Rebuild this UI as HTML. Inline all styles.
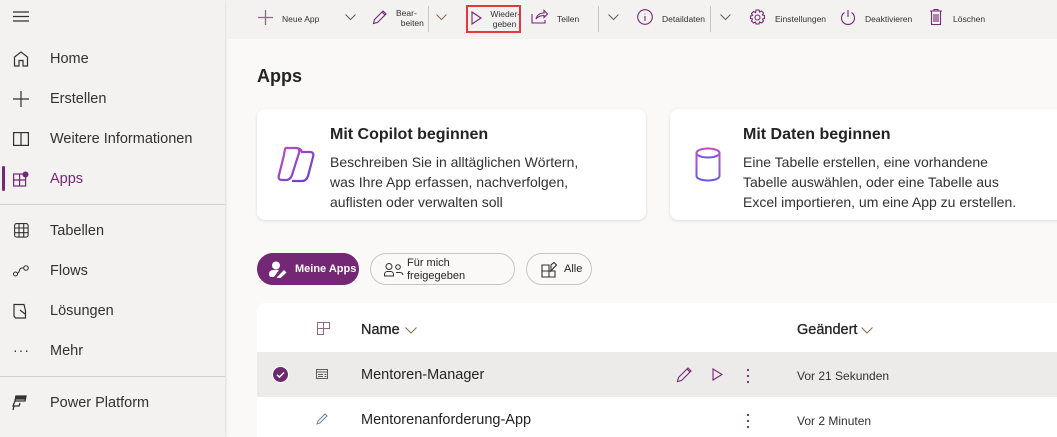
<!DOCTYPE html>
<html><head><meta charset="utf-8"><style>
*{box-sizing:border-box;margin:0;padding:0}
body{width:1057px;height:437px;overflow:hidden;background:#faf9f8;font-family:"Liberation Sans",sans-serif;color:#242424;position:relative}
.abs{position:absolute}
#side{left:0;top:0;width:225px;height:437px;background:#f3f2f1;box-shadow:1px 0 3px rgba(0,0,0,.12)}
.ni{position:absolute;left:50px;font-size:14.5px;color:#323130;line-height:18px}
.ic{position:absolute}
#tb{left:226px;top:0;width:831px;height:39px;background:#f3f2f1}
.tt{position:absolute;font-size:8.5px;color:#323130;line-height:10px}
.sep{position:absolute;top:6px;width:1px;height:26px;background:#c8c6c4}
.card{position:absolute;background:#fff;border-radius:8px;box-shadow:0 1px 3px rgba(0,0,0,.13)}
.ct{position:absolute;font-size:16px;font-weight:bold;color:#242424}
.cb{position:absolute;font-size:14px;line-height:20px;color:#323130}
.pill{position:absolute;top:253px;height:32px;border-radius:16px;border:1px solid #c8c6c4;background:#faf9f8;font-size:11px;color:#242424}
</style></head><body>
<div id="side" class="abs">
<svg class="ic" style="left:13px;top:11px" width="16" height="12"><path d="M0 1h16M0 5.5h16M0 10h16" stroke="#323130" stroke-width="1.2"/></svg>
<svg class="ic" style="left:13px;top:51px" width="16" height="16" fill="none" stroke="#323130" stroke-width="1.2"><path d="M1.5 15V6L8 1l6.5 5v9h-4.5V9.5h-4V15z"/></svg>
<div class="ni" style="top:50px">Home</div>
<svg class="ic" style="left:13px;top:91px" width="16" height="16"><path d="M8 0v16M0 8h16" stroke="#323130" stroke-width="1.2"/></svg>
<div class="ni" style="top:90px">Erstellen</div>
<svg class="ic" style="left:13px;top:131px" width="16" height="16" fill="none" stroke="#323130" stroke-width="1.2"><rect x=".6" y="1.6" width="14.8" height="12.8"/><path d="M8 1.6v12.8"/></svg>
<div class="ni" style="top:130px">Weitere Informationen</div>
<div class="abs" style="left:2px;top:166px;width:3px;height:25px;background:#742774;border-radius:2px"></div>
<svg class="ic" style="left:13px;top:171px" width="16" height="16" fill="none" stroke="#742774" stroke-width="1.2"><rect x=".6" y="3" width="12" height="12"/><path d="M6.6 3v12M.6 9h12"/><circle cx="12.5" cy="3.5" r="3" fill="#742774" stroke="none"/></svg>
<div class="ni" style="top:170px;color:#742774">Apps</div>
<div class="abs" style="left:0;top:204px;width:225px;height:1px;background:#d2d0ce"></div>
<svg class="ic" style="left:14px;top:223px" width="15" height="15" fill="none" stroke="#323130" stroke-width="1.1"><rect x=".6" y=".6" width="13.5" height="13.5" rx="2"/><path d="M5 .6v13.5M9.7.6v13.5M.6 5h13.5M.6 9.7h13.5"/></svg>
<div class="ni" style="top:222px">Tabellen</div>
<svg class="ic" style="left:13px;top:265px" width="16" height="12" fill="none" stroke="#323130" stroke-width="1"><circle cx="2.5" cy="9" r="2"/><circle cx="13" cy="3" r="2.3"/><path d="M4.3 8C7 8 6 3 8.5 3h2.2"/></svg>
<div class="ni" style="top:262px">Flows</div>
<svg class="ic" style="left:13px;top:303px" width="16" height="16" fill="none" stroke="#323130" stroke-width="1.2"><path d="M1 1.5h10l1.5 6.5V15H2.5L1 13zM7 7l5 4"/></svg>
<div class="ni" style="top:302px">Lösungen</div>
<div class="ni" style="top:341px;left:13px;font-size:14px;letter-spacing:1px">···</div>
<div class="ni" style="top:342px">Mehr</div>
<div class="abs" style="left:0;top:376px;width:225px;height:1px;background:#d2d0ce"></div>
<svg class="ic" style="left:11px;top:395px" width="17" height="16" fill="none" stroke="#323130" stroke-width="1.3"><path d="M5 1h10l-1 5H4zM4 6L2 11h6l1-3M3 11l-1 4"/><path d="M5 1.5h9.5l-.5 2.5H4.5z" fill="#323130"/></svg>
<div class="ni" style="top:394px">Power Platform</div>
</div>

<div id="tb" class="abs">
<svg class="ic" style="left:32px;top:10px" width="15" height="15"><path d="M7.5 0v15M0 7.5h15" stroke="#8a6a87" stroke-width="1.3"/></svg>
<div class="tt" style="left:56px;top:14px">Neue App</div>
<svg class="ic" style="left:119px;top:14px" width="11" height="7" fill="none" stroke="#605e5c"><path d="M.5.5l5 5 5-5"/></svg>
<svg class="ic" style="left:146px;top:9px" width="16" height="16" fill="none" stroke="#742774" stroke-width="1.1"><path d="M1.5 14.5l1-4L11 2l3 3-8.5 8.5zM10 3l3 3"/></svg>
<div class="tt" style="left:170px;top:8px">Bear-<br>&nbsp;&nbsp;beiten</div>
<div class="sep" style="left:202px"></div>
<svg class="ic" style="left:210px;top:14px" width="11" height="7" fill="none" stroke="#8a6a4a"><path d="M.5.5l5 5 5-5"/></svg>
<div class="abs" style="left:240px;top:5px;width:55px;height:28px;border:2px solid #e0393e"></div>
<svg class="ic" style="left:245px;top:11px" width="11" height="14" fill="none" stroke="#742774" stroke-width="1.1"><path d="M1 1l9 6-9 6z"/></svg>
<div class="tt" style="left:262px;top:9px">&nbsp;Wieder-<br>&nbsp;&nbsp;geben</div>
<svg class="ic" style="left:305px;top:9px" width="17" height="15" fill="none" stroke="#742774" stroke-width="1.1"><path d="M1 5v9h13v-3M5 10c1-4 4-6 8-6V1.5l3.5 3.5L13 8.5V6.5c-3 0-6 1-8 3.5"/></svg>
<div class="tt" style="left:331px;top:14px">Teilen</div>
<div class="sep" style="left:372px"></div>
<svg class="ic" style="left:382px;top:14px" width="11" height="7" fill="none" stroke="#605e5c"><path d="M.5.5l5 5 5-5"/></svg>
<svg class="ic" style="left:411px;top:9px" width="16" height="16" fill="none" stroke="#742774" stroke-width="1.1"><circle cx="8" cy="8" r="7.3"/><path d="M8 7v5M8 4.5v.8"/></svg>
<div class="tt" style="left:436px;top:14px">Detaildaten</div>
<div class="sep" style="left:484px"></div>
<svg class="ic" style="left:494px;top:14px" width="11" height="7" fill="none" stroke="#605e5c"><path d="M.5.5l5 5 5-5"/></svg>
<svg class="ic" style="left:523px;top:9px" width="17" height="17" fill="none" stroke="#742774" stroke-width="1.1"><circle cx="8.5" cy="8.5" r="2.5"/><path d="M7 1h3l.5 2 2-1 2 2-1 2 2 .5v3l-2 .5 1 2-2 2-2-1-.5 2H7l-.5-2-2 1-2-2 1-2-2-.5V7l2-.5-1-2 2-2 2 1z"/></svg>
<div class="tt" style="left:549px;top:14px">Einstellungen</div>
<svg class="ic" style="left:614px;top:9px" width="16" height="17" fill="none" stroke="#742774" stroke-width="1.1"><path d="M8 1v7M4.5 3.5a6.5 6.5 0 1 0 7 0"/></svg>
<div class="tt" style="left:639px;top:14px">Deaktivieren</div>
<svg class="ic" style="left:704px;top:9px" width="12" height="16" fill="none" stroke="#742774" stroke-width="1.1"><path d="M0 2h12M4 2V.5h4V2M1.5 2v13.5h9V2M4 5v8M6 5v8M8 5v8"/></svg>
<div class="tt" style="left:727px;top:14px">Löschen</div>
</div>

<div class="abs" style="left:257px;top:66px;font-size:18px;font-weight:bold;color:#242424">Apps</div>

<div class="card" style="left:257px;top:109px;width:389px;height:111px">
<svg class="ic" style="left:19px;top:36px" width="42" height="38" fill="none" stroke-width="2.2"><defs><linearGradient id="g1" x1="0" y1="0" x2="1" y2="1"><stop offset="0" stop-color="#c44cc0"/><stop offset="1" stop-color="#5b3fd4"/></linearGradient></defs><path stroke="url(#g1)" d="M10 3h10c3 0 4 2 3 5l-7 22c-1 3-3 5-6 5H6c-3 0-4-2-3-5l5-20c.5-4 1-7 2-7zM20 3c3 0 5 1 6 4h8c3 0 4 2 3 5l-5 19c-1 3-3 5-6 5H16"/></svg>
<div class="ct" style="left:73px;top:17px">Mit Copilot beginnen</div>
<div class="cb" style="left:73px;top:43px">Beschreiben Sie in alltäglichen Wörtern,<br>was Ihre App erfassen, nachverfolgen,<br>auflisten oder verwalten soll</div>
</div>
<div class="card" style="left:670px;top:109px;width:395px;height:111px">
<svg class="ic" style="left:25px;top:38px" width="26" height="36" fill="none" stroke-width="2"><defs><linearGradient id="g2" x1="0" y1="0" x2="0" y2="1"><stop offset="0" stop-color="#c44cc0"/><stop offset="1" stop-color="#6a5ae8"/></linearGradient></defs><g stroke="url(#g2)"><ellipse cx="13" cy="6" rx="11.5" ry="4.5"/><path d="M1.5 6v23c0 2.5 5 4.5 11.5 4.5s11.5-2 11.5-4.5V6"/></g></svg>
<div class="ct" style="left:73px;top:17px">Mit Daten beginnen</div>
<div class="cb" style="left:73px;top:43px">Eine Tabelle erstellen, eine vorhandene<br>Tabelle auswählen, oder eine Tabelle aus<br>Excel importieren, um eine App zu erstellen.</div>
</div>

<div class="pill" style="left:257px;width:102px;background:#742774;border-color:#742774;color:#fff;font-weight:bold">
<svg class="ic" style="left:11px;top:7px" width="18" height="17"><circle cx="7" cy="4.5" r="4" fill="#fff"/><path d="M0 13c0-2.5 2-4 4-4h6l-5 7H2c-1 0-2-1-2-3zM8 16l7-7 2.5 2.5-7 6.5-3 .5z" fill="#fff"/></svg>
<span class="abs" style="left:37px;top:9px">Meine Apps</span></div>
<div class="pill" style="left:370px;width:145px">
<svg class="ic" style="left:13px;top:9px" width="20" height="14" fill="none" stroke="#323130" stroke-width="1"><circle cx="5" cy="3.5" r="3"/><circle cx="14" cy="4" r="2.3"/><path d="M.5 13v-1.5c0-2 1.5-3 3-3h3c1.5 0 3 1 3 3V13h-9zM12 9.5h4c1.5 0 3 1 3 2.5"/></svg>
<span class="abs" style="left:36px;top:3px;line-height:13px">Für mich<br>freigegeben</span></div>
<div class="pill" style="left:526px;width:66px">
<svg class="ic" style="left:14px;top:8px" width="17" height="16" fill="none" stroke="#323130" stroke-width="1.1"><path d="M1 3h7v12H1zM1 9h13v6H8M10 9V3l3-2.5L15.5 3 13 5.5z"/></svg>
<span class="abs" style="left:37px;top:9px">Alle</span></div>

<div class="abs" style="left:257px;top:303px;width:800px;height:134px;background:#fff;border-radius:8px 0 0 0"></div>
<svg class="ic" style="left:317px;top:322px" width="13" height="13" fill="none" stroke="#8a6a87" stroke-width="1"><path d="M.5.5h12v6h-6v6h-6zM6.5.5v6M.5 6.5h6"/></svg>
<div class="abs" style="left:361px;top:322px;font-size:14.5px;color:#242424;-webkit-text-stroke:.3px #242424">Name</div>
<svg class="ic" style="left:405px;top:327px" width="12" height="7" fill="none" stroke="#8a6a4a"><path d="M.5.5l5.5 5.5L11.5.5"/></svg>
<div class="abs" style="left:797px;top:322px;font-size:14.5px;color:#242424;-webkit-text-stroke:.3px #242424">Geändert</div>
<svg class="ic" style="left:861px;top:327px" width="12" height="7" fill="none" stroke="#8a6a4a"><path d="M.5.5l5.5 5.5L11.5.5"/></svg>

<div class="abs" style="left:257px;top:352px;width:800px;height:45px;background:#edebe9"></div>
<svg class="ic" style="left:272px;top:366px" width="17" height="17"><circle cx="8.5" cy="8.5" r="8" fill="#6b2a6b" stroke="#fff" stroke-width="1"/><path d="M5 8.8l2.4 2.3L12 6.5" fill="none" stroke="#fff" stroke-width="1.5"/></svg>
<svg class="ic" style="left:316px;top:369px" width="12" height="10" fill="none" stroke="#605e5c"><rect x=".5" y=".5" width="11" height="9"/><path d="M.5 3h11M2 5.5h5M2 7.5h5M8.5 5.5h2M8.5 7.5h2" stroke-width=".9"/></svg>
<div class="abs" style="left:361px;top:367px;font-size:14.5px;color:#242424">Mentoren-Manager</div>
<svg class="ic" style="left:676px;top:366px" width="17" height="17" fill="none" stroke="#742774" stroke-width="1.1"><path d="M1.5 15.5l1-4L12 2l3 3-9.5 9.5zM11 3l3 3"/></svg>
<svg class="ic" style="left:712px;top:368px" width="11" height="13" fill="none" stroke="#742774" stroke-width="1.1"><path d="M1 1l9 5.5-9 5.5z"/></svg>
<div class="abs" style="left:747px;top:367px;width:2px;height:16px;background:radial-gradient(circle,#742774 1px,transparent 1.2px) 0 0/2px 6px"></div>
<div class="abs" style="left:797px;top:369px;font-size:12px;color:#323130">Vor 21 Sekunden</div>

<svg class="ic" style="left:316px;top:413px" width="12" height="12" fill="none" stroke="#6a7aaa" stroke-width="1"><path d="M1 11l1-3 7-7 2 2-7 7z"/></svg>
<div class="abs" style="left:361px;top:412px;font-size:14.5px;color:#242424">Mentorenanforderung-App</div>
<div class="abs" style="left:747px;top:412px;width:2px;height:16px;background:radial-gradient(circle,#742774 1px,transparent 1.2px) 0 0/2px 6px"></div>
<div class="abs" style="left:797px;top:414px;font-size:12px;color:#323130">Vor 2 Minuten</div>
</body></html>
